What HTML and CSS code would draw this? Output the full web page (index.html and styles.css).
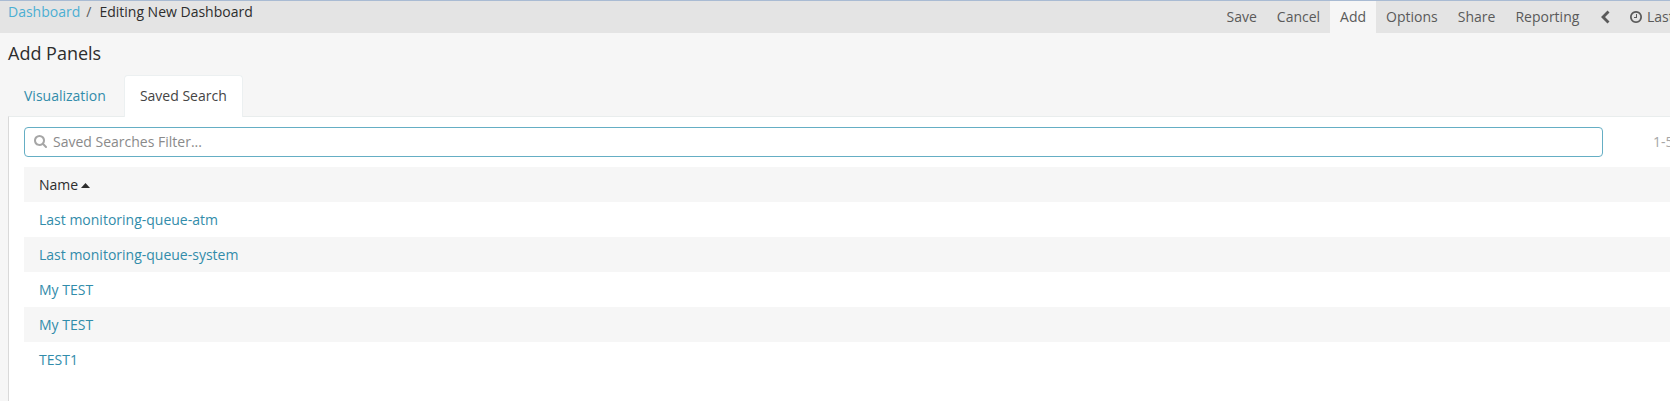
FILE: index.html
```html
<!DOCTYPE html>
<html lang="en">
<head>
<meta charset="utf-8">
<title>Editing New Dashboard</title>
<link rel="stylesheet" href="styles.css">
</head>
<body>
<header class="navbar">
  <div class="breadcrumbs"><a class="crumb-link">Dashboard</a><span class="crumb-sep">/</span><span>Editing New Dashboard</span></div>
  <nav class="menu">
    <a class="menu-item">Save</a>
    <a class="menu-item">Cancel</a>
    <a class="menu-item active">Add</a>
    <a class="menu-item">Options</a>
    <a class="menu-item">Share</a>
    <a class="menu-item">Reporting</a>
    <a class="menu-item step"><svg class="chevron" viewBox="0 0 9 14"><path d="M6.500.5 8.500 2.500 4 7l4.500 4.500-2 2L0 7z"/></svg></a>
    <a class="menu-item time"><svg class="clock" viewBox="0 128 1536 1536"><path d="M896 544v448q0 14-9 23t-23 9h-320q-14 0-23-9t-9-23v-64q0-14 9-23t23-9h224v-352q0-14 9-23t23-9h64q14 0 23 9t9 23zm416 352q0-148-73-273t-198-198-273-73-273 73-198 198-73 273 73 273 198 198 273 73 273-73 198-198 73-273zm224 0q0 209-103 385.500t-279.500 279.500-385.500 103-385.500-103-279.500-279.500-103-385.500 103-385.500 279.500-279.500 385.500-103 385.500 103 279.500 279.500 103 385.500z"/></svg>Last</a>
  </nav>
</header>
<main class="content">
  <h1 class="title">Add Panels</h1>
  <div class="tabs">
    <a class="tab">Visualization</a>
    <a class="tab selected">Saved Search</a>
  </div>
  <section class="panel">
    <div class="filter-row">
      <div class="filter"><svg class="search" viewBox="64 128 1664 1664"><path d="M1216 832q0-185-131.500-316.500t-316.500-131.500-316.500 131.500-131.500 316.500 131.500 316.500 316.500 131.500 316.500-131.500 131.500-316.500zm512 832q0 52-38 90t-90 38q-54 0-90-38l-343-342q-179 124-399 124-143 0-273.500-55.500t-225-150-150-225-55.500-273.500 55.500-273.500 150-225 225-150 273.500-55.500 273.500 55.500 225 150 150 225 55.500 273.500q0 220-124 399l343 343q37 37 37 90z"/></svg><span>Saved Searches Filter...</span></div>
      <span class="count">1-5</span>
    </div>
    <div class="list">
      <div class="row head">Name<svg class="caret" viewBox="0 0 9 5"><path d="M0 5 4.500 0 9 5z"/></svg></div>
      <a class="row">Last monitoring-queue-atm</a>
      <a class="row">Last monitoring-queue-system</a>
      <a class="row">My TEST</a>
      <a class="row">My TEST</a>
      <a class="row">TEST1</a>
    </div>
  </section>
</main>
</body>
</html>
```
FILE: styles.css
```css
* { box-sizing: border-box; }
html, body { height: 100%; }
body {
  margin: 0;
  display: flex;
  flex-direction: column;
  overflow: hidden;
  background: #f6f6f6;
  color: #2d2d2d;
  font: 14px/20px "Open Sans", sans-serif;
  white-space: nowrap;
}
svg { fill: currentColor; flex: none; display: block; }
.navbar {
  display: flex;
  flex: none;
  height: 33px;
  border-top: 1px solid #a9bbd3;
  background: #e4e4e4;
}
.breadcrumbs { width: 1216.500px; flex: none; padding: 1px 0 0 8px; }
.crumb-link { color: #4cafd3; }
.crumb-sep { margin: 0 8px 0 6px; color: #5a5a5a; }
.menu { display: flex; flex: none; }
.menu-item {
  display: flex;
  align-items: center;
  padding: 0 10px;
  color: #5a5a5a;
}
.active { background: #f6f6f6; }
.step { padding: 0 10px 1px 11.700px; }
.chevron { width: 9px; height: 14px; }
.clock { width: 12px; height: 12px; margin-right: 5px; }
.content { display: flex; flex-direction: column; flex: 1; padding-left: 8px; }
.title { margin: 7px 0 0; font-size: 18px; line-height: 26px; font-weight: 400; }
.tabs { display: flex; gap: 2px; margin-top: 9px; }
.tab {
  height: 42px;
  padding: 10px 15px 0;
  border: 1px solid transparent;
  border-bottom: 0;
  border-radius: 4px 4px 0 0;
  color: #328caa;
}
.selected {
  position: relative;
  z-index: 1;
  background: #fff;
  border-color: #ecf0f1;
  color: #444;
}
.panel {
  flex: 1;
  margin-top: -1px;
  padding: 10px 0 0 15px;
  background: #fff;
  border-top: 1px solid #e9eded;
  border-left: 1px solid #d9d9d9;
}
.filter-row { display: flex; align-items: center; }
.filter {
  display: flex;
  align-items: center;
  flex: none;
  width: 1579px;
  height: 30px;
  padding: 0 9px;
  border: 1px solid #65aec4;
  border-radius: 4px;
  color: #8a8a8a;
}
.search { width: 13px; height: 13px; margin: 0 6px 1px 0; color: #a6a6a6; }
.count { margin-left: 50px; color: #a6a6a6; }
.list { margin-top: 10px; }
.row { display: flex; align-items: center; height: 35px; padding-left: 15px; color: #328caa; }
.row:nth-child(odd) { background: #f6f6f6; }
.head { color: #2d2d2d; }
.caret { width: 9px; height: 5px; margin: 2px 0 0 3px; }
```
